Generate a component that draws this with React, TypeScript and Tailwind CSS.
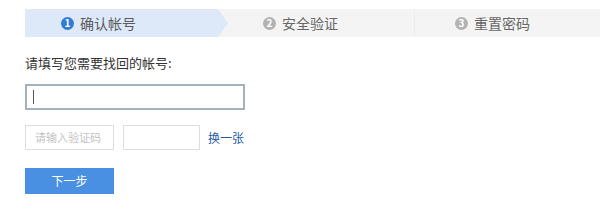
const steps = [
  { n: 1, label: "确认帐号" },
  { n: 2, label: "安全验证" },
  { n: 3, label: "重置密码" },
];

function StepDot({ n, active }: { n: number; active: boolean }) {
  return (
    <span
      className={
        "flex h-[13px] w-[13px] items-center justify-center rounded-full text-[10px] font-bold leading-none text-white " +
        (active ? "bg-[#2f7bd6]" : "bg-[#b3b3b3]")
      }
    >
      {n}
    </span>
  );
}

export default function App() {
  return (
    <div className="h-[222px] w-[600px] bg-white font-['Noto_Sans_CJK_SC',sans-serif] text-[#333]">
      <div className="pt-[9px] pl-[25px]">
        <div className="flex h-[28px] bg-[#f4f4f4]">
          <div className="flex w-[193px] items-center bg-[#dde9f9] pl-[36px]">
            <StepDot n={1} active />
            <span className="ml-[6px] text-[14px] text-[#5a5a5a]">{steps[0].label}</span>
          </div>
          <div className="h-[28px] w-[10px] bg-[#dde9f9] [clip-path:polygon(0_0,100%_50%,0_100%)]" />
          <div className="flex w-[187px] items-center border-r border-[#ececec] pl-[35px]">
            <StepDot n={2} active={false} />
            <span className="ml-[6px] text-[14px] text-[#666]">{steps[1].label}</span>
          </div>
          <div className="flex flex-1 items-center pl-[40px]">
            <StepDot n={3} active={false} />
            <span className="ml-[6px] text-[14px] text-[#666]">{steps[2].label}</span>
          </div>
        </div>

        <p className="mt-[18px] text-[13px] leading-[16px] text-[#333]">请填写您需要找回的帐号:</p>

        <div className="mt-[13px] flex h-[26px] w-[220px] items-center border-2 border-[#a4b1bd] pl-[6px]">
          <span className="h-[14px] w-[1px] bg-[#555]" />
        </div>

        <div className="mt-[15px] flex items-center">
          <div className="flex h-[25px] w-[89px] items-center border border-[#dedede] pl-[9px] text-[11px] text-[#c4c4c4]">
            请输入验证码
          </div>
          <div className="ml-[9px] h-[25px] w-[77px] border border-[#dedede]" />
          <a className="ml-[8px] text-[12px] text-[#1f5ca5]">换一张</a>
        </div>

        <button className="mt-[18px] flex h-[26px] w-[89px] items-center justify-center bg-[#4a90e2] text-[12px] text-white">
          下一步
        </button>
      </div>
    </div>
  );
}
